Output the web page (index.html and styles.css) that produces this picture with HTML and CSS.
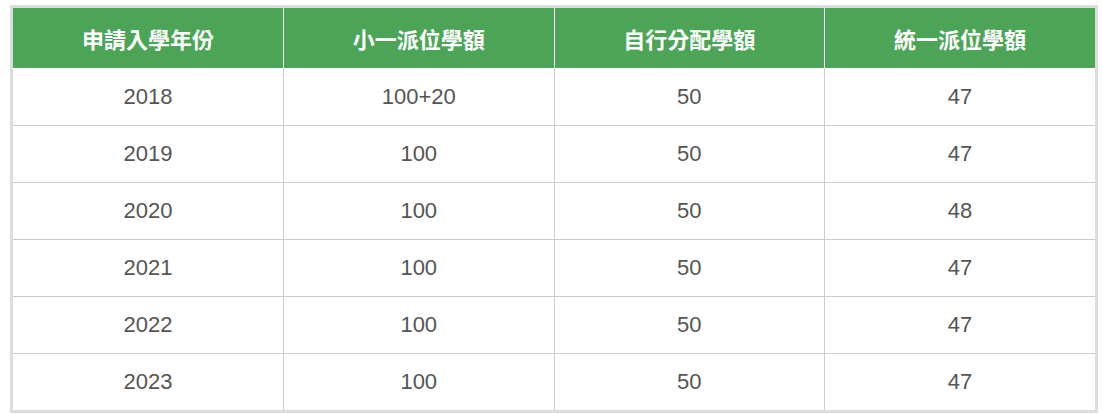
FILE: index.html
```html
<!DOCTYPE html>
<html lang="zh-Hant">
<head>
<meta charset="utf-8">
<link rel="stylesheet" href="styles.css">
</head>
<body>
<div class="wrap">
<table class="quota">
  <thead>
    <tr><th>申請入學年份</th><th>小一派位學額</th><th>自行分配學額</th><th>統一派位學額</th></tr>
  </thead>
  <tbody>
    <tr><td>2018</td><td>100+20</td><td>50</td><td>47</td></tr>
    <tr><td>2019</td><td>100</td><td>50</td><td>47</td></tr>
    <tr><td>2020</td><td>100</td><td>50</td><td>48</td></tr>
    <tr><td>2021</td><td>100</td><td>50</td><td>47</td></tr>
    <tr><td>2022</td><td>100</td><td>50</td><td>47</td></tr>
    <tr><td>2023</td><td>100</td><td>50</td><td>47</td></tr>
  </tbody>
</table>
</div>
</body>
</html>
```
FILE: styles.css
```css
html, body { margin: 0; padding: 0; background: #fff; }
body { padding: 5px 4px 0 10px; }
.wrap {
  width: 1082px;
  border: 3px solid #dddddd;
}
.quota {
  width: 100%;
  border-collapse: collapse;
  table-layout: fixed;
  font-family: "Liberation Sans", Arial, "Noto Sans CJK TC", sans-serif;
  font-size: 22px;
}
.quota th {
  background: #4ca557;
  color: #fff;
  font-weight: bold;
  height: 60px;
  padding: 0;
  text-align: center;
  border-left: 1px solid #fff;
}
.quota th:first-child { border-left: none; }
.quota td {
  height: 56px;
  padding: 0;
  text-align: center;
  color: #555;
  border-left: 1px solid #cccccc;
  border-top: 1px solid #cccccc;
}
.quota td:first-child { border-left: none; }
.quota tbody tr:first-child td { border-top: none; height: 57px; }
```
